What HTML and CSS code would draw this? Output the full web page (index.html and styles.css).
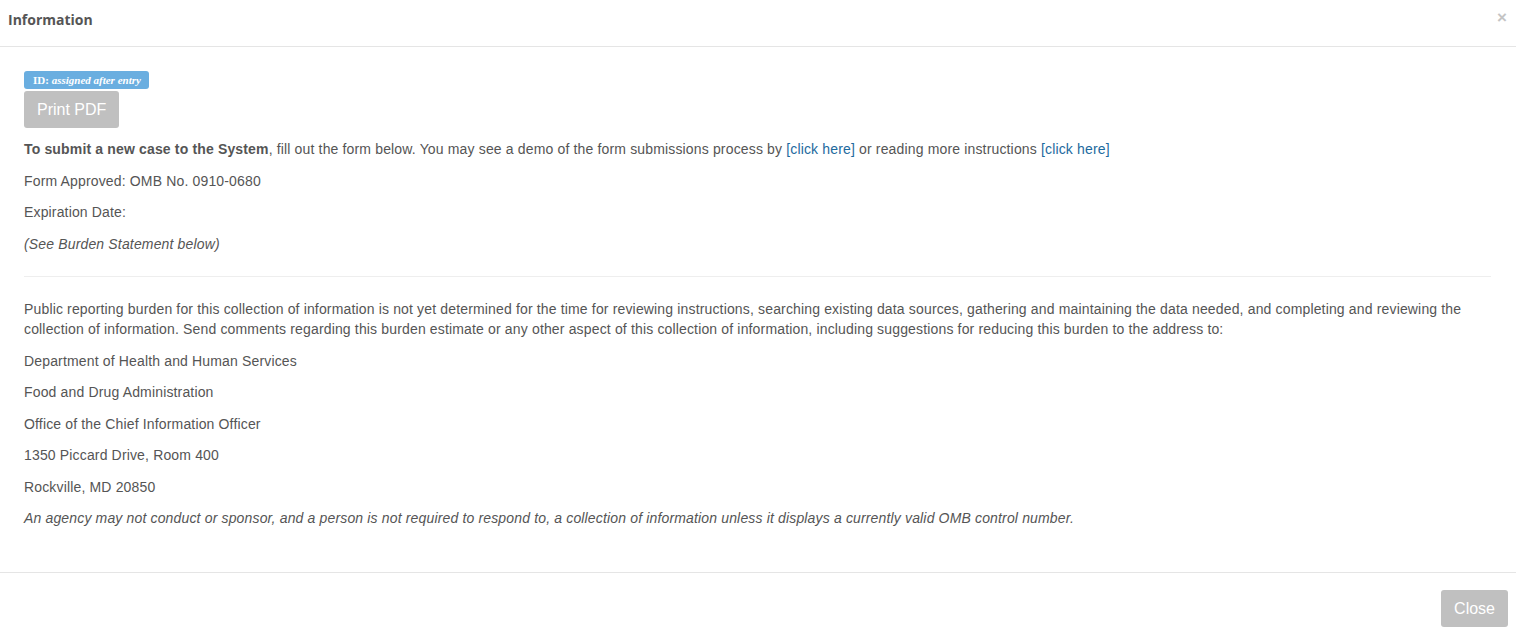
FILE: index.html
```html
<!DOCTYPE html>
<html lang="en">
<head>
    <meta charset="UTF-8">
    <title>Information</title>
    <link rel="stylesheet" href="styles.css">
</head>
<body>
    <div class="modal">
        <div class="modal-header">
            <h4 class="modal-title">Information</h4>
            <span class="close">&times;</span>
        </div>
        <div class="modal-body">
            <div class="badge"><b>ID:</b> <i>assigned after entry</i></div>
            <div><button class="btn">Print PDF</button></div>
            <p class="intro"><b>To submit a new case to the System</b>, fill out the form below. You may see a demo of the form submissions process by <a href="#">[click here]</a> or reading more instructions <a href="#">[click here]</a></p>
            <p>Form Approved: OMB No. 0910-0680</p>
            <p>Expiration Date:</p>
            <p><i>(See Burden Statement below)</i></p>
            <hr>
            <p class="burden">Public reporting burden for this collection of information is not yet determined for the time for reviewing instructions, searching existing data sources, gathering and maintaining the data needed, and completing and reviewing the collection of information. Send comments regarding this burden estimate or any other aspect of this collection of information, including suggestions for reducing this burden to the address to:</p>
            <p>Department of Health and Human Services</p>
            <p>Food and Drug Administration</p>
            <p>Office of the Chief Information Officer</p>
            <p>1350 Piccard Drive, Room 400</p>
            <p>Rockville, MD 20850</p>
            <p><i>An agency may not conduct or sponsor, and a person is not required to respond to, a collection of information unless it displays a currently valid OMB control number.</i></p>
        </div>
        <div class="modal-footer">
            <button class="btn">Close</button>
        </div>
    </div>
</body>
</html>
```

FILE: styles.css
```css
body {
    margin: 0;
    font-family: "Liberation Sans", Arial, sans-serif;
    font-size: 14px;
    line-height: 20px;
    color: #555;
    background: #fff;
}
.modal {
    width: 1516px;
    height: 635px;
    display: flex;
    flex-direction: column;
}
.modal-header {
    height: 47px;
    border-bottom: 1px solid #e5e5e5;
    display: flex;
    align-items: center;
    justify-content: space-between;
    padding: 0 9px 0 8px;
    box-sizing: border-box;
}
.modal-title {
    margin: 0 0 6px;
    font-family: "Open Sans", sans-serif;
    font-size: 14px;
    font-weight: 700;
    color: #555;
}
.close {
    font-family: "Liberation Sans", Arial, sans-serif;
    font-size: 17px;
    font-weight: 700;
    color: #c4c4c4;
    margin-bottom: 10px;
}
.modal-body {
    padding: 24px 25px 22px 24px;
    letter-spacing: 0.155px;
}
.badge {
    display: inline-block;
    background: #6aaee0;
    color: #fff;
    font-family: "Liberation Serif", "Times New Roman", serif;
    font-size: 11px;
    font-weight: 700;
    line-height: 18px;
    height: 18px;
    padding: 0 8px 0 9px;
    border-radius: 3px;
    vertical-align: top;
    letter-spacing: 0;
}
.btn {
    font-family: "Liberation Sans", Arial, sans-serif;
    font-size: 16px;
    line-height: 23px;
    padding: 7px 13px;
    background: #c0c0c0;
    color: #fff;
    border: 0;
    border-radius: 3px;
}
p {
    margin: 0 0 11.5px;
}
.intro {
    margin-top: 11px;
}
.burden {
    margin-bottom: 12px;
}
a {
    color: #1d6a9e;
    text-decoration: none;
}
hr {
    border: 0;
    border-top: 1px solid #eee;
    margin: 22px 0 22px;
}
.modal-footer {
    margin-top: auto;
    border-top: 1px solid #e5e5e5;
    height: 63px;
    box-sizing: border-box;
    display: flex;
    justify-content: flex-end;
    align-items: flex-start;
    padding: 17px 8px 0 0;
}
```
